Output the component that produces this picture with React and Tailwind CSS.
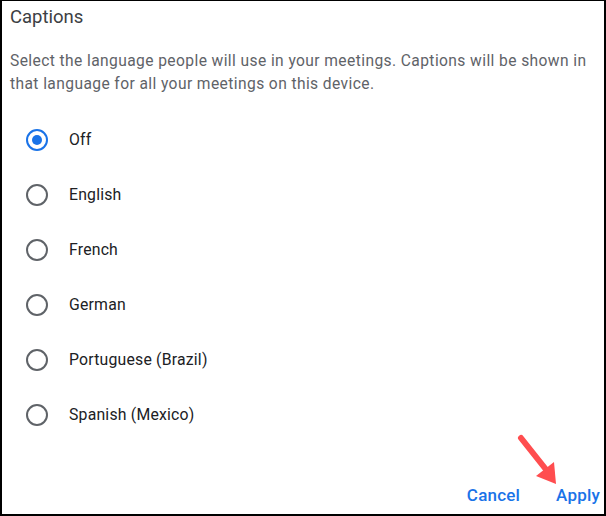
import React from "react";

const langs = ["Off", "English", "French", "German", "Portuguese (Brazil)", "Spanish (Mexico)"];

function Radio({ checked }) {
  return (
    <svg width="24" height="24" viewBox="0 0 24 24" className="shrink-0">
      <circle cx="12" cy="12" r="10" fill="none" stroke={checked ? "#1a73e8" : "#5f6368"} strokeWidth="2" />
      {checked && <circle cx="12" cy="12" r="5" fill="#1a73e8" />}
    </svg>
  );
}

export default function App() {
  return (
    <div className="relative w-[606px] h-[516px] bg-white border-l-2 border-r-2 border-b-2 border-t border-black overflow-hidden" style={{ fontFamily: "Roboto, 'Liberation Sans', sans-serif" }}>
      <div className="pl-[8px] pr-[12px]">
        <div className="h-[34px] flex items-center text-[18.5px] text-[#3c4043]">Captions</div>
        <p className="mt-[15px] text-[15.6px] leading-[23px] tracking-[0.4px] text-[#5f6368]">
          Select the language people will use in your meetings. Captions will be shown in that language for all your meetings on this device.
        </p>
        <div className="mt-[16px] flex flex-col">
          {langs.map((l, i) => (
            <div key={l} className="h-[55px] flex items-center">
              <div className="w-[24px] ml-[15px] flex items-center"><Radio checked={i === 0} /></div>
              <span className="ml-[20px] text-[15.8px] tracking-[0.2px] text-[#202124]">{l}</span>
            </div>
          ))}
        </div>
      </div>
      <div className="absolute bottom-[6px] right-[4px] flex gap-[36px] text-[17px] font-medium tracking-[0.2px] text-[#1a73e8]">
        <span>Cancel</span>
        <span>Apply</span>
      </div>
      <svg className="absolute left-[510px] top-[428px]" width="50" height="60" viewBox="0 0 50 60">
        <line x1="9" y1="9" x2="36" y2="43" stroke="#ff4d4f" strokeWidth="6" strokeLinecap="round" />
        <polygon points="44,55 24,47 42,33" fill="#ff4d4f" />
      </svg>
    </div>
  );
}
